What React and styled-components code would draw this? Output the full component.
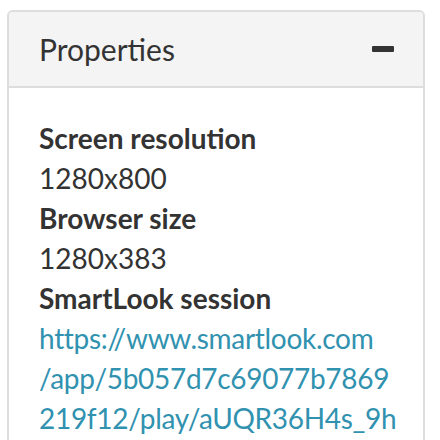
import styled, { createGlobalStyle } from 'styled-components'

const GlobalStyle = createGlobalStyle`
  body {
    margin: 0;
    background: #ffffff;
    font-family: Lato, "Open Sans", sans-serif;
    color: #333333;
  }
`

const Page = styled.div`
  padding: 10px 15px 0 7px;
`

const Panel = styled.section`
  border: 2px solid #dddddd;
  border-radius: 6px;
  overflow: hidden;
`

const PanelHeader = styled.header`
  display: flex;
  align-items: center;
  justify-content: space-between;
  height: 74px;
  padding: 0 29px 0 30px;
  background: #f4f4f4;
  border-bottom: 2px solid #dddddd;
`

const PanelTitle = styled.h2`
  margin: 0;
  font-size: 30px;
  font-weight: 400;
  color: #333333;
`

const CollapseButton = styled.button`
  width: 22px;
  height: 6px;
  padding: 0;
  border: none;
  border-radius: 1px;
  background: #333333;
  cursor: pointer;
`

const PanelBody = styled.dl`
  margin: 0;
  padding: 30px 30px 20px 30px;
  font-size: 28px;
  line-height: 40px;
`

const Term = styled.dt`
  font-weight: 700;
`

const Value = styled.dd`
  margin: 0;
`

const Link = styled.a`
  color: #3192b0;
  text-decoration: none;
  letter-spacing: -0.3px;
`

const LinkLine = styled.span`
  display: block;
  white-space: nowrap;
`

const sessionUrl =
  'https://www.smartlook.com/app/5b057d7c69077b7869219f12/play/aUQR36H4s_9h'

const urlLines = [
  'https://www.smartlook.com',
  '/app/5b057d7c69077b7869',
  '219f12/play/aUQR36H4s_9h',
]

const properties = [
  { label: 'Screen resolution', value: '1280x800' },
  { label: 'Browser size', value: '1280x383' },
  { label: 'SmartLook session', url: sessionUrl, lines: urlLines },
]

export default function App() {
  return (
    <Page>
      <GlobalStyle />
      <Panel>
        <PanelHeader>
          <PanelTitle>Properties</PanelTitle>
          <CollapseButton aria-label="Collapse" />
        </PanelHeader>
        <PanelBody>
          {properties.map((p) => (
            <div key={p.label}>
              <Term>{p.label}</Term>
              <Value>
                {p.url ? (
                  <Link href={p.url}>
                    {p.lines.map((line) => (
                      <LinkLine key={line}>{line}</LinkLine>
                    ))}
                  </Link>
                ) : (
                  p.value
                )}
              </Value>
            </div>
          ))}
        </PanelBody>
      </Panel>
    </Page>
  )
}
